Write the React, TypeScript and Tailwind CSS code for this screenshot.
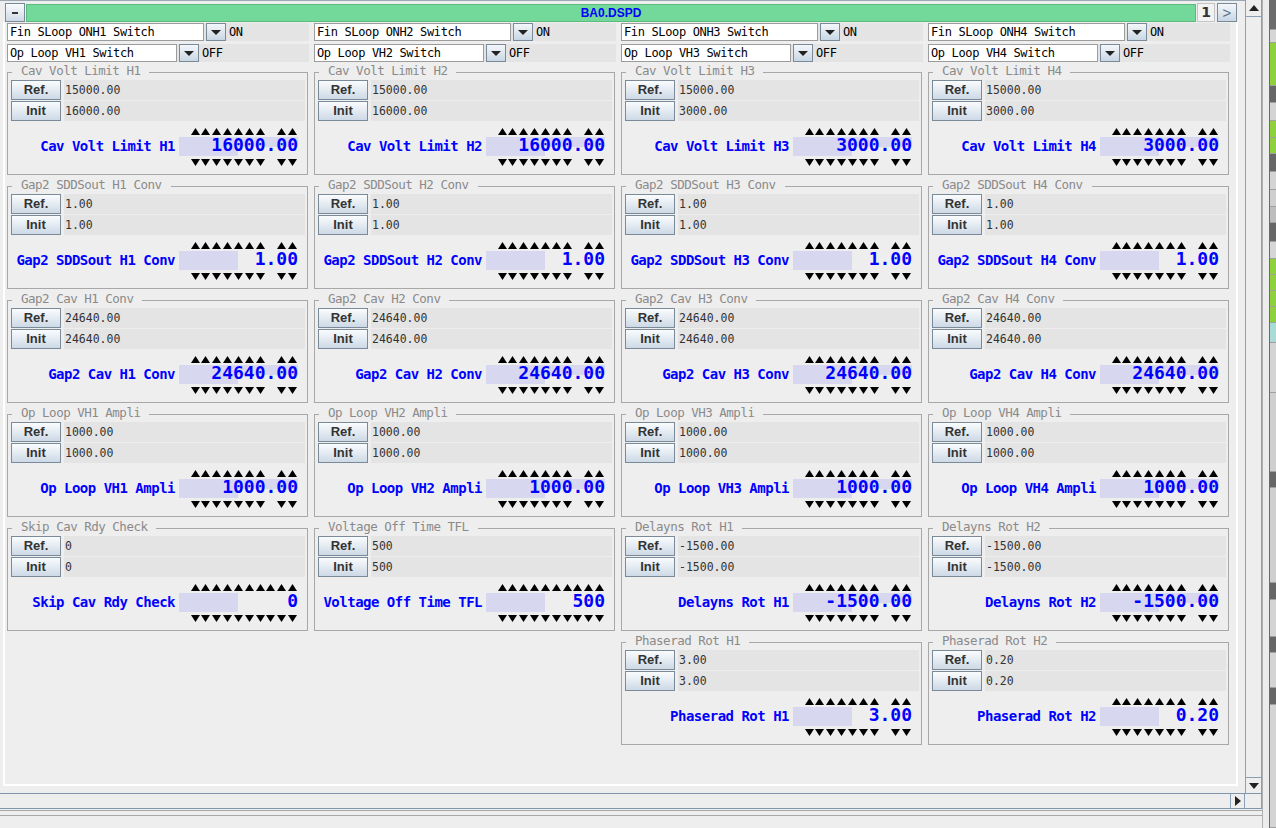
import React from "react";

type P = { t: string; r: string; i: string; v: string; int?: boolean };
type C = { sw: string; op: string; panels: P[] };

const columns: C[] = [
  {
    sw: "Fin SLoop ONH1 Switch",
    op: "Op Loop VH1 Switch",
    panels: [
      { t: "Cav Volt Limit H1", r: "15000.00", i: "16000.00", v: "16000.00" },
      { t: "Gap2 SDDSout H1 Conv", r: "1.00", i: "1.00", v: "1.00" },
      { t: "Gap2 Cav H1 Conv", r: "24640.00", i: "24640.00", v: "24640.00" },
      { t: "Op Loop VH1 Ampli", r: "1000.00", i: "1000.00", v: "1000.00" },
      { t: "Skip Cav Rdy Check", r: "0", i: "0", v: "0", int: true },
    ],
  },
  {
    sw: "Fin SLoop ONH2 Switch",
    op: "Op Loop VH2 Switch",
    panels: [
      { t: "Cav Volt Limit H2", r: "15000.00", i: "16000.00", v: "16000.00" },
      { t: "Gap2 SDDSout H2 Conv", r: "1.00", i: "1.00", v: "1.00" },
      { t: "Gap2 Cav H2 Conv", r: "24640.00", i: "24640.00", v: "24640.00" },
      { t: "Op Loop VH2 Ampli", r: "1000.00", i: "1000.00", v: "1000.00" },
      { t: "Voltage Off Time TFL", r: "500", i: "500", v: "500", int: true },
    ],
  },
  {
    sw: "Fin SLoop ONH3 Switch",
    op: "Op Loop VH3 Switch",
    panels: [
      { t: "Cav Volt Limit H3", r: "15000.00", i: "3000.00", v: "3000.00" },
      { t: "Gap2 SDDSout H3 Conv", r: "1.00", i: "1.00", v: "1.00" },
      { t: "Gap2 Cav H3 Conv", r: "24640.00", i: "24640.00", v: "24640.00" },
      { t: "Op Loop VH3 Ampli", r: "1000.00", i: "1000.00", v: "1000.00" },
      { t: "Delayns Rot H1", r: "-1500.00", i: "-1500.00", v: "-1500.00" },
      { t: "Phaserad Rot H1", r: "3.00", i: "3.00", v: "3.00" },
    ],
  },
  {
    sw: "Fin SLoop ONH4 Switch",
    op: "Op Loop VH4 Switch",
    panels: [
      { t: "Cav Volt Limit H4", r: "15000.00", i: "3000.00", v: "3000.00" },
      { t: "Gap2 SDDSout H4 Conv", r: "1.00", i: "1.00", v: "1.00" },
      { t: "Gap2 Cav H4 Conv", r: "24640.00", i: "24640.00", v: "24640.00" },
      { t: "Op Loop VH4 Ampli", r: "1000.00", i: "1000.00", v: "1000.00" },
      { t: "Delayns Rot H2", r: "-1500.00", i: "-1500.00", v: "-1500.00" },
      { t: "Phaserad Rot H2", r: "0.20", i: "0.20", v: "0.20" },
    ],
  },
];

const strip: [number, string][] = [
  [30, "bg-[#6b6b6b]"],
  [13, "bg-[#d6d6d6]"],
  [43, "bg-[#8fd13c]"],
  [17, "bg-[#666666]"],
  [18, "bg-[#d4d4d4]"],
  [17, "bg-[#8fd13c]"],
  [16, "bg-[#8fd13c]"],
  [18, "bg-[#666666]"],
  [18, "bg-[#d4d4d4]"],
  [17, "bg-[#cfcfcf]"],
  [16, "bg-[#bdbdbd]"],
  [19, "bg-[#666666]"],
  [17, "bg-[#d6d6d6]"],
  [16, "bg-[#8fd13c]"],
  [16, "bg-[#8fd13c]"],
  [16, "bg-[#8fd13c]"],
  [16, "bg-[#8fd13c]"],
  [20, "bg-[#a9dcd6]"],
  [50, "bg-[#d4d4d4]"],
  [79, "bg-[#cfcfcf]"],
  [16, "bg-[#666666]"],
  [95, "bg-[#cfcfcf]"],
  [17, "bg-[#666666]"],
  [37, "bg-[#d4d4d4]"],
  [16, "bg-[#666666]"],
  [35, "bg-[#d4d4d4]"],
  [17, "bg-[#666666]"],
  [123, "bg-[#d4d4d4]"],
];

function Tri({ down }: { down?: boolean }) {
  return (
    <svg width="9" height="7" viewBox="0 0 9 7" className="block">
      <path d={down ? "M0 0H9L4.5 7Z" : "M4.5 0L9 7H0Z"} fill="#000" />
    </svg>
  );
}

function Arrows({ int, down }: { int?: boolean; down?: boolean }) {
  const cells = Array.from({ length: 10 }, (_, k) => int || k !== 7);
  return (
    <div className="flex justify-end pr-[7px] h-[9px] items-center">
      {cells.map((on, k) => (
        <div key={k} className="w-[10.84px] flex justify-center">
          {on ? <Tri down={down} /> : null}
        </div>
      ))}
    </div>
  );
}

function SmallBtn({ label }: { label: string }) {
  return (
    <div className="w-[50px] h-[20px] shrink-0 border border-[#7a8a99] bg-[linear-gradient(#fafcfd,#cdd9e6)] flex items-center justify-center text-[13px] font-bold text-[#333] font-['Liberation_Sans',sans-serif]">
      {label}
    </div>
  );
}

function Panel({ p }: { p: P }) {
  const long = p.v.length >= 6;
  return (
    <fieldset className="m-0 w-[301px] h-[111px] min-w-0 border border-[#a8a8a8] pl-[3px] pr-[2px] pt-0 pb-0">
      <legend className="ml-[1px] px-[9px] pb-[4px] text-[12.5px] leading-[13px] tracking-[-0.5px] text-[#8a8a8a] font-['DejaVu_Sans_Mono',monospace] whitespace-nowrap">
        {p.t}
      </legend>
      <div className="flex h-[20px] mt-[-1px]">
        <SmallBtn label="Ref." />
        <div className="ml-[3px] flex-1 bg-[#e4e4e4] pl-[1px] text-[11.5px] leading-[20px] text-[#333] font-['DejaVu_Sans_Mono',monospace]">
          {p.r}
        </div>
      </div>
      <div className="flex h-[20px] mt-[1px]">
        <SmallBtn label="Init" />
        <div className="ml-[3px] flex-1 bg-[#e4e4e4] pl-[1px] text-[11.5px] leading-[20px] text-[#333] font-['DejaVu_Sans_Mono',monospace]">
          {p.i}
        </div>
      </div>
      <div className="mt-[6px]">
        <Arrows int={p.int} />
      </div>
      <div className="flex h-[19px] mt-[1px]">
        <div className="w-[164px] text-right text-[14px] leading-[19px] tracking-[-0.5px] font-bold text-[#0000ff] font-['DejaVu_Sans_Mono',monospace] whitespace-nowrap">
          {p.t}
        </div>
        <div
          className={
            long
              ? "ml-[4px] w-[119px] h-[19px] text-right text-[18px] leading-[16px] font-bold text-[#0000ff] font-['DejaVu_Sans_Mono',monospace] bg-[image:linear-gradient(to_right,#d7d7ef_59px,transparent_59px),linear-gradient(to_bottom,#d7d7ef_10px,transparent_10px)]"
              : "ml-[4px] w-[119px] h-[19px] text-right text-[18px] leading-[16px] font-bold text-[#0000ff] font-['DejaVu_Sans_Mono',monospace] bg-[image:linear-gradient(to_right,#d7d7ef_59px,transparent_59px)]"
          }
        >
          {p.v}
        </div>
      </div>
      <div className="mt-[2px]">
        <Arrows int={p.int} down />
      </div>
    </fieldset>
  );
}

function DropBtn() {
  return (
    <div className="w-[20px] h-full shrink-0 ml-[2px] border border-[#7a8a99] bg-[linear-gradient(#f4f7fa,#c8d6e4)] flex items-center justify-center">
      <svg width="10" height="5" viewBox="0 0 10 5" className="block">
        <path d="M0 0H10L5 5Z" fill="#222" />
      </svg>
    </div>
  );
}

function Combo({ text, w, state }: { text: string; w: string; state: string }) {
  return (
    <div className="flex h-[18px] bg-[#e4e4e4] items-stretch">
      <div
        className={
          w +
          " h-full bg-white border border-[#9c9c9c] pl-[2px] text-[12px] tracking-[-0.35px] leading-[16px] text-black font-['DejaVu_Sans_Mono',monospace] whitespace-nowrap overflow-hidden"
        }
      >
        {text}
      </div>
      <DropBtn />
      <div className="ml-[3px] text-[12px] tracking-[-0.35px] leading-[18px] text-black font-['DejaVu_Sans_Mono',monospace]">
        {state}
      </div>
    </div>
  );
}

export default function App() {
  return (
    <div className="w-[1276px] h-[828px] flex bg-[#eeeeee] overflow-hidden">
      <div className="w-[1262px] flex flex-col shrink-0">
        <div className="flex h-[793px]">
          <div className="w-[1245px] flex flex-col">
            <div className="h-[3px] border-t border-[#9aa7b5]" />
            <div className="h-[19px] flex pl-[5px]">
              <div className="w-[20px] h-[19px] border border-[#7a8a99] bg-[linear-gradient(#fafcfd,#cdd9e6)] flex items-center justify-center">
                <div className="w-[6px] h-[2px] bg-[#333]" />
              </div>
              <div className="ml-[1px] w-[1170px] h-[18px] mt-[1px] bg-[#72d99a] border border-[#5cba7c] flex items-center justify-center text-[12px] font-bold text-[#0000ff] font-['Liberation_Sans',sans-serif]">
                BA0.DSPD
              </div>
              <div className="ml-[1px] w-[18px] h-[19px] bg-[#f2f2f2] border border-[#c4c4c4] flex items-center justify-center text-[14px] font-bold text-[#333] font-['DejaVu_Sans',sans-serif]">
                1
              </div>
              <div className="ml-[2px] w-[20px] h-[19px] border border-[#7a8a99] bg-[linear-gradient(#f4f7fa,#c8d6e4)] flex items-center justify-center text-[15px] leading-none text-[#5a6a7c] font-['Liberation_Sans',sans-serif]">
                &gt;
              </div>
            </div>
            <div className="ml-[3px] w-[1235px] h-[764px] border-l-2 border-r-2 border-b-2 border-white pl-[2px] pt-[1px]">
              <div className="flex gap-[5px]">
                {columns.map((c, ci) => (
                  <div key={ci} className="w-[302px] flex flex-col">
                    <Combo text={c.sw} w="w-[197px]" state="ON" />
                    <div className="mt-[3px]">
                      <Combo text={c.op} w="w-[170px]" state="OFF" />
                    </div>
                    <div className="mt-[2px] flex flex-col gap-[3px]">
                      {c.panels.map((p, pi) => (
                        <Panel key={pi} p={p} />
                      ))}
                    </div>
                  </div>
                ))}
              </div>
            </div>
          </div>
          <div className="w-[17px] flex flex-col border-l border-[#8aa0b6] border-r border-r-[#9a9a9a]">
            <div className="h-[17px] border-b border-[#8aa0b6] flex items-center justify-center">
              <svg width="10" height="6" viewBox="0 0 10 6" className="block">
                <path d="M5 0L10 6H0Z" fill="#222" />
              </svg>
            </div>
            <div className="flex-1" />
            <div className="h-[16px] border-t border-[#8aa0b6] flex items-center justify-center">
              <svg width="10" height="6" viewBox="0 0 10 6" className="block">
                <path d="M0 0H10L5 6Z" fill="#222" />
              </svg>
            </div>
          </div>
        </div>
        <div className="h-[16px] flex border-t border-b border-[#7f95ab]">
          <div className="w-[1230px]" />
          <div className="w-[15px] border-l border-r border-[#8aa0b6] flex items-center justify-center">
            <svg width="6" height="10" viewBox="0 0 6 10" className="block">
              <path d="M0 0L6 5L0 10Z" fill="#222" />
            </svg>
          </div>
          <div className="flex-1 border-r border-[#9a9a9a]" />
        </div>
        <div className="mt-[1px] border-t border-[#a8a8a8]" />
        <div className="mt-[4px] flex-1 border-t border-[#a8a8a8]" />
      </div>
      <div className="w-[7px] shrink-0 border-l border-[#b0b0b0] bg-[#ececec]" />
      <div className="w-[7px] shrink-0 border-l border-[#3d6fc6] flex flex-col">
        {strip.map(([h, cls], k) => (
          <div key={k} className={cls + " shrink-0 border-b border-[#a0a0a0]"} style={{ height: h }} />
        ))}
      </div>
    </div>
  );
}
